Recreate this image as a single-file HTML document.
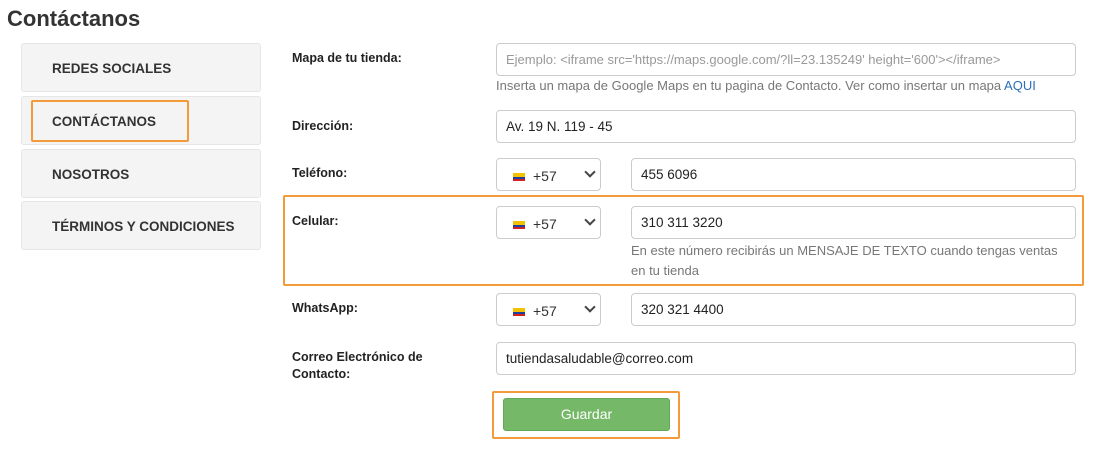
<!DOCTYPE html>
<html><head><meta charset="utf-8"><style>
body{margin:0;width:1093px;height:453px;background:#fff;font-family:"Liberation Sans",sans-serif;position:relative;overflow:hidden}
.a{position:absolute}
h1{position:absolute;left:7px;top:6px;margin:0;font-size:22px;font-weight:bold;color:#333}
.side{position:absolute;left:21px;width:240px;height:49px;background:#f4f4f4;border:1px solid #e6e6e6;border-radius:3px;box-sizing:border-box;font-size:13.5px;font-weight:bold;color:#333;padding-left:30px;line-height:49px}
.lbl{position:absolute;left:292px;font-size:12.5px;font-weight:bold;color:#222}
.in{position:absolute;border:1px solid #ccc;border-radius:4px;box-sizing:border-box;height:33px;font-size:13.5px;color:#222;padding-left:9px;line-height:31px;background:#fff}
.sel{position:absolute;left:496px;width:105px;height:33px;border:1px solid #ccc;border-radius:4px;box-sizing:border-box;background:#fff;font-size:14px;color:#333}
.flag{position:absolute;left:16px;top:14px;width:12px;height:8px;background:linear-gradient(#f2c200 50%,#1f3fa0 50% 75%,#d02020 75%)}
.sel span{position:absolute;left:36px;top:9px}
.sel i{position:absolute;right:6px;top:9px;width:6px;height:6px;border-right:2px solid #444;border-bottom:2px solid #444;transform:rotate(45deg)}
.help{position:absolute;font-size:13px;color:#777}
.or{position:absolute;border:2px solid #f39a3a;border-radius:2px;box-sizing:border-box}
</style></head><body>
<h1>Contáctanos</h1>
<div class="side" style="top:43px">REDES SOCIALES</div>
<div class="side" style="top:96px">CONTÁCTANOS</div>
<div class="side" style="top:149px">NOSOTROS</div>
<div class="side" style="top:201px">TÉRMINOS Y CONDICIONES</div>
<div class="or" style="left:31px;top:100px;width:158px;height:42px"></div>

<div class="lbl" style="top:51px">Mapa de tu tienda:</div>
<div class="in" style="left:496px;top:43px;width:580px;color:#999;font-size:13px">Ejemplo: &lt;iframe src='https://maps.google.com/?ll=23.135249' height='600'&gt;&lt;/iframe&gt;</div>
<div class="help" style="left:496px;top:78px">Inserta un mapa de Google Maps en tu pagina de Contacto. Ver como insertar un mapa <span style="color:#2a6ebb">AQUI</span></div>

<div class="lbl" style="top:119px">Dirección:</div>
<div class="in" style="left:496px;top:110px;width:580px">Av. 19 N. 119 - 45</div>

<div class="lbl" style="top:166px">Teléfono:</div>
<div class="sel" style="top:158px"><b class="flag"></b><span>+57</span><i></i></div>
<div class="in" style="left:631px;top:158px;width:445px">455 6096</div>

<div class="or" style="left:283px;top:195px;width:801px;height:91px"></div>
<div class="lbl" style="top:214px">Celular:</div>
<div class="sel" style="top:206px"><b class="flag"></b><span>+57</span><i></i></div>
<div class="in" style="left:631px;top:206px;width:445px">310 311 3220</div>
<div class="help" style="left:631px;top:241px;line-height:20px;width:440px">En este número recibirás un MENSAJE DE TEXTO cuando tengas ventas<br>en tu tienda</div>

<div class="lbl" style="top:301px">WhatsApp:</div>
<div class="sel" style="top:293px"><b class="flag"></b><span>+57</span><i></i></div>
<div class="in" style="left:631px;top:293px;width:445px">320 321 4400</div>

<div class="lbl" style="top:349px;line-height:17px">Correo Electrónico de<br>Contacto:</div>
<div class="in" style="left:496px;top:342px;width:580px">tutiendasaludable@correo.com</div>

<div class="or" style="left:492px;top:391px;width:188px;height:48px"></div>
<div class="a" style="left:503px;top:398px;width:167px;height:33px;background:#74b868;border:1px solid #63a857;box-sizing:border-box;border-radius:3px;color:#fff;font-size:14px;text-align:center;line-height:31px">Guardar</div>
</body></html>
